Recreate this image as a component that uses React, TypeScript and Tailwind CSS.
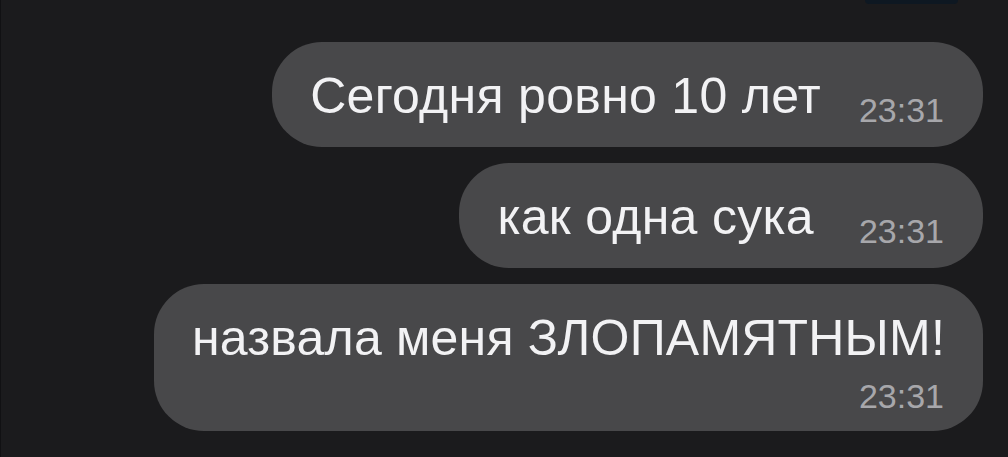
import React from 'react';

type Message = {
  id: number;
  text: string;
  time: string;
  wrapTime?: boolean;
};

const messages: Message[] = [
  { id: 1, text: 'Сегодня ровно 10 лет', time: '23:31' },
  { id: 2, text: 'как одна сука', time: '23:31' },
  { id: 3, text: 'назвала меня ЗЛОПАМЯТНЫМ!', time: '23:31', wrapTime: true },
];

const font = { fontFamily: '"Liberation Sans", Arial, sans-serif' };

function Bubble({ msg }: { msg: Message }) {
  if (msg.wrapTime) {
    return (
      <div className="flex flex-col rounded-[50px] bg-[#48484a] pl-[38px] pr-[38px] pt-[24px] pb-[15px]">
        <span className="text-[50px] leading-[60px] tracking-[0.2px] text-[#f2f2f4] whitespace-nowrap">{msg.text}</span>
        <span className="self-end mt-[8px] mr-[1px] text-[34px] leading-[40px] text-[#a7a7ab]">{msg.time}</span>
      </div>
    );
  }

  return (
    <div className="flex items-end rounded-[50px] bg-[#48484a] pl-[38px] pr-[39px] pt-[24px] pb-[21px]">
      <span className="text-[50px] leading-[60px] tracking-[0.3px] text-[#f2f2f4] whitespace-nowrap">{msg.text}</span>
      <span className={`${msg.id === 2 ? 'ml-[45px]' : 'ml-[38px]'} -mb-[4px] text-[34px] leading-[40px] text-[#a7a7ab]`}>
        {msg.time}
      </span>
    </div>
  );
}

export default function App() {
  return (
    <div
      className="h-[457px] w-[1008px] overflow-hidden bg-[#1b1b1d] border-l border-[#111113] flex flex-col items-end pr-[25px]"
      style={font}
    >
      {/* cut-off element from above */}
      <div className="h-[4px] w-[93px] mr-[25px] rounded-b-[6px] bg-[#0e1822]" />

      <div className="mt-[38px] flex flex-col items-end gap-[16px]">
        {messages.map((m) => (
          <Bubble key={m.id} msg={m} />
        ))}
      </div>
    </div>
  );
}
